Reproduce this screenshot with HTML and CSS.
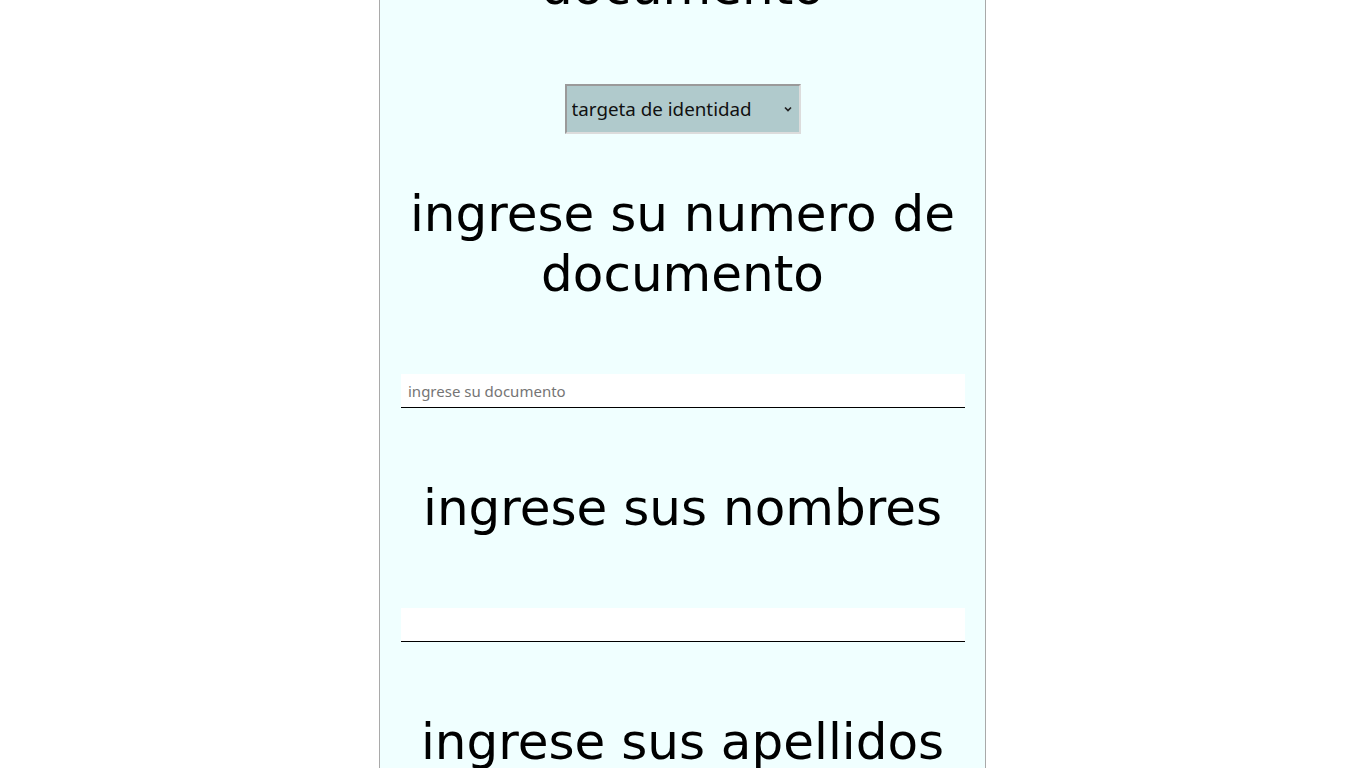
FILE: index.html
```html
<!DOCTYPE html>
<html lang="es">
<head>
    <meta charset="UTF-8">
    <meta name="viewport" content="width=device-width, initial-scale=1.0">
    <title>Registro</title>
    <link rel="stylesheet" href="styles.css">
</head>
<body>
    <form class="registro">
        <h1>ingrese su tipo de documento</h1>
        <div class="select-wrap">
            <select class="tipo-doc" name="tipo">
                <option>targeta de identidad</option>
                <option>cedula de ciudadania</option>
                <option>cedula de extranjeria</option>
            </select>
            <svg class="flecha" width="8" height="6" viewBox="0 0 8 6"><path d="M1 1.5 L4 4.5 L7 1.5" fill="none" stroke="#222" stroke-width="1.7"/></svg>
        </div>

        <h1>ingrese su numero de documento</h1>
        <input type="text" class="campo" name="documento" placeholder="ingrese su documento">

        <h1>ingrese sus nombres</h1>
        <input type="text" class="campo" name="nombres">

        <h1>ingrese sus apellidos</h1>
        <input type="text" class="campo" name="apellidos">
    </form>
</body>
</html>
```

FILE: styles.css
```css
body {
    margin: 0;
    background: #ffffff;
    font-family: "DejaVu Sans", sans-serif;
    color: #000;
}
.registro {
    width: 565px;
    margin: -173px 0 0 calc(50% - 304px);
    padding: 0 20px 40px;
    background: #f0ffff;
    border: 1px solid #a9a9a9;
    border-top: none;
}
.registro h1 {
    font-size: 50px;
    line-height: 60px;
    font-weight: normal;
    text-align: center;
    margin: 70px 0;
}
.select-wrap {
    position: relative;
    width: 236px;
    margin: -3px auto -20px;
}
.tipo-doc {
    display: block;
    box-sizing: border-box;
    width: 236px;
    height: 50px;
    padding: 0 20px 0 5px;
    font-family: "Noto Sans", sans-serif;
    font-size: 18.8px;
    color: #111;
    background: #b0cacc;
    border: 2px solid;
    border-color: #9a9a9a #dcdcdc #dcdcdc #9a9a9a;
    border-radius: 0;
    appearance: none;
    -webkit-appearance: none;
    outline: none;
}
.flecha {
    position: absolute;
    right: 9px;
    top: 22px;
    pointer-events: none;
}
.campo {
    display: block;
    box-sizing: border-box;
    width: 564px;
    height: 34px;
    margin: 0 0 0 1px;
    padding: 0 7px;
    font-family: "Noto Sans", sans-serif;
    font-size: 15px;
    background: #fff;
    border: none;
    border-bottom: 1px solid #000;
    outline: none;
}
.campo::placeholder {
    color: #757575;
}
```
